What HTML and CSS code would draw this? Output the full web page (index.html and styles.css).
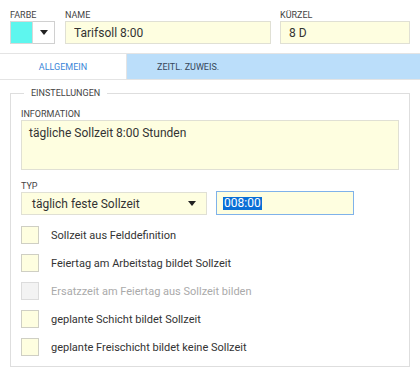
FILE: index.html
```html
<!DOCTYPE html>
<html lang="de">
<head>
    <meta charset="UTF-8">
    <meta name="viewport" content="width=device-width, initial-scale=1.0">
    <title>Tarifsoll</title>
    <link rel="stylesheet" href="styles.css">
</head>
<body>
    <div class="head">
        <div class="field farbe">
            <label>FARBE</label>
            <div class="color-pick">
                <span class="swatch"></span>
                <span class="drop"><span class="arrow"></span></span>
            </div>
        </div>
        <div class="field name">
            <label>NAME</label>
            <input class="input" type="text" value="Tarifsoll 8:00">
        </div>
        <div class="field kuerzel">
            <label>KÜRZEL</label>
            <input class="input" type="text" value="8 D">
        </div>
    </div>

    <div class="tabs">
        <div class="tab active">ALLGEMEIN</div>
        <div class="tab">ZEITL. ZUWEIS.</div>
    </div>

    <fieldset class="group">
        <legend>EINSTELLUNGEN</legend>
        <label>INFORMATION</label>
        <textarea class="info">tägliche Sollzeit 8:00 Stunden</textarea>

        <label class="typ-label">TYP</label>
        <div class="typ-row">
            <div class="select">
                <span>täglich feste Sollzeit</span>
                <span class="arrow"></span>
            </div>
            <div class="time"><span class="sel">008:00</span></div>
        </div>

        <div class="checks">
            <div class="check"><span class="box"></span>Sollzeit aus Felddefinition</div>
            <div class="check"><span class="box"></span>Feiertag am Arbeitstag bildet Sollzeit</div>
            <div class="check disabled"><span class="box"></span>Ersatzzeit am Feiertag aus Sollzeit bilden</div>
            <div class="check"><span class="box"></span>geplante Schicht bildet Sollzeit</div>
            <div class="check"><span class="box"></span>geplante Freischicht bildet keine Sollzeit</div>
        </div>
    </fieldset>
</body>
</html>
```

FILE: styles.css
```css
body {
    font-family: Roboto, 'Liberation Sans', sans-serif;
    background-color: #fff;
    margin: 0;
    padding: 10px 10px 0 10px;
    color: #333;
}
label, legend {
    display: block;
    font-size: 9px;
    line-height: 11px;
    color: #444;
}
.head {
    display: flex;
    gap: 10px;
}
.field.farbe {
    width: 45px;
}
.field.name {
    width: 206px;
}
.field.kuerzel {
    flex: 1;
    margin-left: -1px;
}
.color-pick {
    display: flex;
    height: 23px;
}
.swatch {
    width: 23px;
    background-color: #5ef6ee;
    border: 1px solid #d8d8d8;
    box-sizing: border-box;
}
.drop {
    flex: 1;
    border: 1px solid #d0d0d0;
    border-left: none;
    display: flex;
    align-items: center;
    justify-content: center;
}
.arrow {
    width: 0;
    height: 0;
    border-left: 4px solid transparent;
    border-right: 4px solid transparent;
    border-top: 5px solid #222;
}
.input {
    display: block;
    width: 100%;
    box-sizing: border-box;
    height: 23px;
    margin: 0;
    padding: 0 8px;
    font-family: inherit;
    font-size: 12px;
    color: #333;
    background-color: #fefee0;
    border: 1px solid #e0e0d4;
    outline: none;
}
.tabs {
    display: flex;
    height: 25px;
    margin: 9px -10px 0 -10px;
    border-top: 1px solid #e4e4e4;
    border-bottom: 1px solid #e4e4e4;
}
.tab {
    display: flex;
    align-items: center;
    font-size: 9px;
    color: #37475a;
    background-color: #bbdefa;
    padding: 0 30px;
    flex: 1;
}
.tab.active {
    flex: none;
    width: 127px;
    box-sizing: border-box;
    justify-content: center;
    padding: 0;
    color: #3a86d8;
    background-color: #fff;
    border-right: 1px solid #e4e4e4;
}
.group {
    margin: 8px 0 0 0;
    padding: 10px 10px 10px 10px;
    border: 1px solid #dedede;
}
.group legend {
    padding: 0 7px;
    margin-left: 3px;
}
.info {
    display: block;
    width: 100%;
    box-sizing: border-box;
    height: 50px;
    margin: 0;
    padding: 5px 7px;
    font-family: inherit;
    font-size: 12px;
    color: #333;
    background-color: #fefee0;
    border: 1px solid #e0e0d4;
    resize: none;
    outline: none;
}
.typ-label {
    margin-top: 11px;
}
.typ-row {
    display: flex;
    gap: 9px;
}
.select {
    width: 186px;
    height: 23px;
    box-sizing: border-box;
    display: flex;
    align-items: center;
    justify-content: space-between;
    padding: 0 10px;
    font-size: 12px;
    background-color: #fefee0;
    border: 1px solid #e0e0d4;
}
.time {
    width: 138px;
    height: 24px;
    margin-top: -1px;
    box-sizing: border-box;
    display: flex;
    align-items: center;
    padding: 0 6px;
    font-size: 12px;
    background-color: #fefee0;
    border: 1px solid #7fb2ea;
}
.time .sel {
    background-color: #0a6fd6;
    color: #fff;
    line-height: 13px;
    padding: 0 1px;
}
.checks {
    display: flex;
    flex-direction: column;
    gap: 10px;
    margin-top: 11px;
}
.check {
    display: flex;
    align-items: center;
    gap: 12px;
    height: 18px;
    font-size: 11px;
    color: #333;
}
.box {
    width: 18px;
    height: 18px;
    box-sizing: border-box;
    background-color: #fefee0;
    border: 1px solid #cfcfc4;
}
.check.disabled {
    color: #aaa;
}
.check.disabled .box {
    background-color: #f3f3f3;
    border-color: #dcdcdc;
}
```
